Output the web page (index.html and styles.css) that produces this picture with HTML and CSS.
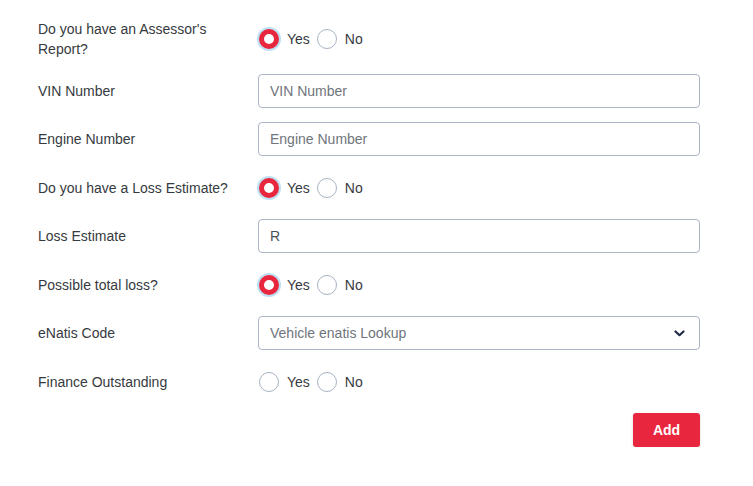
FILE: index.html
```html
<!DOCTYPE html>
<html lang="en">
<head>
<meta charset="utf-8">
<title>Claim details</title>
<link rel="stylesheet" href="styles.css">
</head>
<body>
<form class="form">
  <div class="row row-tall">
    <label class="label">Do you have an Assessor's Report?</label>
    <div class="control radios">
      <label class="opt"><input type="radio" name="assessor" class="radio" checked><span>Yes</span></label>
      <label class="opt"><input type="radio" name="assessor" class="radio"><span>No</span></label>
    </div>
  </div>
  <div class="row">
    <label class="label">VIN Number</label>
    <div class="control"><input class="input" type="text" placeholder="VIN Number"></div>
  </div>
  <div class="row">
    <label class="label">Engine Number</label>
    <div class="control"><input class="input" type="text" placeholder="Engine Number"></div>
  </div>
  <div class="row">
    <label class="label">Do you have a Loss Estimate?</label>
    <div class="control radios">
      <label class="opt"><input type="radio" name="loss" class="radio" checked><span>Yes</span></label>
      <label class="opt"><input type="radio" name="loss" class="radio"><span>No</span></label>
    </div>
  </div>
  <div class="row">
    <label class="label">Loss Estimate</label>
    <div class="control"><input class="input input-value" type="text" value="R"></div>
  </div>
  <div class="row">
    <label class="label">Possible total loss?</label>
    <div class="control radios">
      <label class="opt"><input type="radio" name="total" class="radio" checked><span>Yes</span></label>
      <label class="opt"><input type="radio" name="total" class="radio"><span>No</span></label>
    </div>
  </div>
  <div class="row">
    <label class="label">eNatis Code</label>
    <div class="control">
      <div class="select">
        <span class="select-text">Vehicle enatis Lookup</span>
        <svg class="chevron" width="11" height="7" viewBox="0 0 11 7"><path d="M1.5 1.5 L5.5 5.2 L9.5 1.5" fill="none" stroke="#1f2a44" stroke-width="2.2" stroke-linecap="round" stroke-linejoin="round"/></svg>
      </div>
    </div>
  </div>
  <div class="row">
    <label class="label">Finance Outstanding</label>
    <div class="control radios">
      <label class="opt"><input type="radio" name="finance" class="radio"><span>Yes</span></label>
      <label class="opt"><input type="radio" name="finance" class="radio"><span>No</span></label>
    </div>
  </div>
  <div class="actions">
    <button type="button" class="btn">Add</button>
  </div>
</form>
</body>
</html>
```

FILE: styles.css
```css
* { box-sizing: border-box; }

body {
  margin: 0;
  background: #ffffff;
  font-family: "Liberation Sans", Arial, sans-serif;
  font-size: 14px;
  color: #363a40;
}

.form {
  padding: 19px 53px 0 38px;
  display: flex;
  flex-direction: column;
  gap: 14.5px;
}

.row {
  display: grid;
  grid-template-columns: 200px 1fr;
  column-gap: 20px;
  align-items: center;
  min-height: 34px;
}

.row-tall { min-height: 40px; }

.label {
  line-height: 20px;
  color: #363a40;
}

.control { min-width: 0; }

.radios {
  display: flex;
  align-items: center;
  gap: 6px;
}

.opt {
  display: flex;
  align-items: center;
  gap: 8px;
  color: #363a40;
}

.radio {
  appearance: none;
  -webkit-appearance: none;
  margin: 0 0 0 1px;
  width: 20px;
  height: 20px;
  border-radius: 50%;
  border: 1.5px solid #a8b3c4;
  background: #fff;
}

.radio:checked {
  border: 5.5px solid #e8263d;
  box-shadow: 0 0 0 2px #bfe0f3;
}

.input {
  display: block;
  width: 100%;
  height: 34px;
  border: 1px solid #a9b4c6;
  border-radius: 4px;
  padding: 0 11px;
  font-family: inherit;
  font-size: 14px;
  color: #4a4f55;
  background: #fff;
  outline: none;
}

.input::placeholder { color: #6f757c; }

.select {
  display: flex;
  align-items: center;
  justify-content: space-between;
  height: 34px;
  border: 1px solid #a9b4c6;
  border-radius: 4px;
  padding: 0 14px 0 11px;
  color: #6f757c;
}

.chevron { display: block; }

.actions {
  display: flex;
  justify-content: flex-end;
}

.btn {
  width: 67px;
  height: 34px;
  border: none;
  border-radius: 3px;
  background: #e8263d;
  color: #fff;
  font-family: inherit;
  font-size: 14px;
  font-weight: bold;
  box-shadow: 0 1px 3px rgba(0, 0, 0, 0.15);
}
```
